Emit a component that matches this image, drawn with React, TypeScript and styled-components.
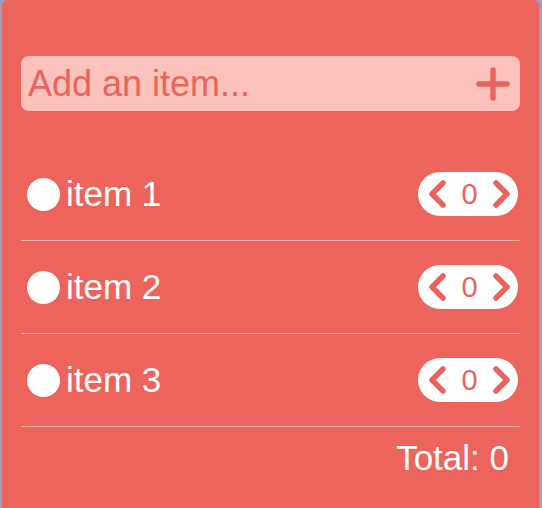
import { FC, useState } from 'react';
import styled, { createGlobalStyle } from 'styled-components';

const GlobalStyle = createGlobalStyle`
  html, body {
    margin: 0;
    padding: 0;
    background: #a79bbd;
    font-family: 'Liberation Sans', Arial, sans-serif;
  }
`;

const Card = styled.div`
  box-sizing: border-box;
  width: 537px;
  min-height: 520px;
  margin: 0 3px 0 2px;
  padding: 56px 19px 0 19px;
  background: #ec645c;
  border-radius: 6px;
  color: #fff;
`;

const InputBar = styled.div`
  display: flex;
  align-items: center;
  height: 55px;
  padding: 0 10px 0 7px;
  background: #fbc1bb;
  border-radius: 8px;
`;

const ItemInput = styled.input`
  flex: 1;
  min-width: 0;
  border: none;
  outline: none;
  background: transparent;
  font-family: 'Liberation Sans', Arial, sans-serif;
  font-size: 36px;
  color: #e8645c;
  padding: 0;
  &::placeholder {
    color: #e8645c;
    opacity: 1;
  }
`;

const AddButton = styled.button`
  display: flex;
  border: none;
  background: none;
  padding: 0;
  cursor: pointer;
`;

const List = styled.ul`
  list-style: none;
  margin: 37px 0 0 0;
  padding: 0;
`;

const Row = styled.li`
  display: flex;
  align-items: center;
  justify-content: space-between;
  height: 92px;
  padding: 0 2px 0 6px;
  border-bottom: 1px solid #f7b3aa;
`;

const Label = styled.div`
  display: flex;
  align-items: center;
  gap: 6px;
  font-size: 35px;
`;

const Dot = styled.span<{ $done: boolean }>`
  width: 33px;
  height: 33px;
  border-radius: 50%;
  background: ${({ $done }) => ($done ? '#fbc1bb' : '#fff')};
`;

const Counter = styled.div`
  display: flex;
  align-items: center;
  justify-content: space-between;
  box-sizing: border-box;
  width: 100px;
  height: 44px;
  padding: 0 6px 0 9px;
  background: #fff;
  border-radius: 22px;
`;

const Arrow = styled.button`
  display: flex;
  border: none;
  background: none;
  padding: 0;
  cursor: pointer;
`;

const Count = styled.span`
  font-size: 29px;
  color: #e8645c;
  font-weight: 300;
`;

const Total = styled.div`
  text-align: right;
  padding: 11px 11px 0 0;
  font-size: 35px;
`;

const Chevron: FC<{ dir: 'left' | 'right' }> = ({ dir }) => (
  <svg width="21" height="30" viewBox="0 0 21 30">
    <path
      d={dir === 'left' ? 'M16 4 L5 15 L16 26' : 'M5 4 L16 15 L5 26'}
      fill="none"
      stroke="#e8645c"
      strokeWidth="5.5"
      strokeLinecap="round"
      strokeLinejoin="round"
    />
  </svg>
);

const App: FC = () => {
  const [items] = useState([
    { name: 'item 1', qty: 0, done: false },
    { name: 'item 2', qty: 0, done: false },
    { name: 'item 3', qty: 0, done: false },
  ]);
  const total = items.reduce((sum, i) => sum + i.qty, 0);

  return (
    <>
      <GlobalStyle />
      <Card>
        <InputBar>
          <ItemInput placeholder="Add an item..." />
          <AddButton>
            <svg width="34" height="34" viewBox="0 0 34 34">
              <path d="M17 3 V31 M3 17 H31" stroke="#e8645c" strokeWidth="5.5" strokeLinecap="round" />
            </svg>
          </AddButton>
        </InputBar>
        <List>
          {items.map((item) => (
            <Row key={item.name}>
              <Label>
                <Dot $done={item.done} />
                {item.name}
              </Label>
              <Counter>
                <Arrow>
                  <Chevron dir="left" />
                </Arrow>
                <Count>{item.qty}</Count>
                <Arrow>
                  <Chevron dir="right" />
                </Arrow>
              </Counter>
            </Row>
          ))}
        </List>
        <Total>Total: {total}</Total>
      </Card>
    </>
  );
};

export default App;
